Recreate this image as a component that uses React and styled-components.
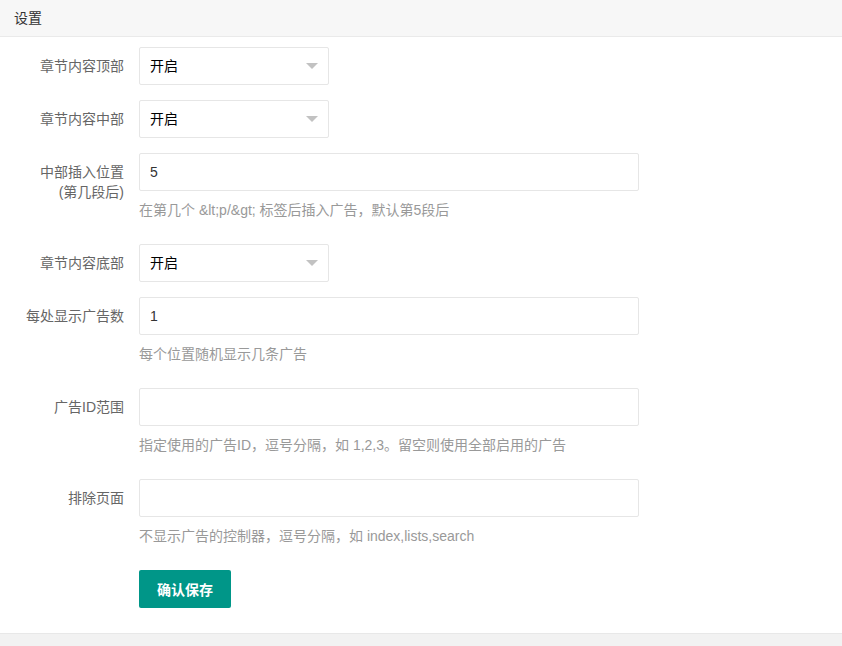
import styled, { createGlobalStyle } from "styled-components";

const GlobalStyle = createGlobalStyle`
  html, body {
    margin: 0;
    padding: 0;
    background: #f2f2f2;
  }
  body {
    font-family: "Liberation Sans", "Noto Sans CJK SC", sans-serif;
    font-size: 14px;
    color: #666;
  }
`;

const fields = [
  { type: "select", label: "章节内容顶部", value: "开启" },
  { type: "select", label: "章节内容中部", value: "开启" },
  {
    type: "input",
    label: "中部插入位置(第几段后)",
    value: "5",
    aux: "在第几个 &lt;p/&gt; 标签后插入广告，默认第5段后",
  },
  { type: "select", label: "章节内容底部", value: "开启" },
  { type: "input", label: "每处显示广告数", value: "1", aux: "每个位置随机显示几条广告" },
  {
    type: "input",
    label: "广告ID范围",
    value: "",
    aux: "指定使用的广告ID，逗号分隔，如 1,2,3。留空则使用全部启用的广告",
  },
  {
    type: "input",
    label: "排除页面",
    value: "",
    aux: "不显示广告的控制器，逗号分隔，如 index,lists,search",
  },
];

function SelectBox({ value }) {
  return (
    <SelectStyled>
      <span>{value}</span>
      <Arrow />
    </SelectStyled>
  );
}

export default function App() {
  return (
    <>
      <GlobalStyle />
      <Card>
        <CardHeader>设置</CardHeader>
        <CardBody>
          {fields.map((f) => (
            <FormItem key={f.label}>
              <Label>{f.label}</Label>
              <Block>
                {f.type === "select" ? (
                  <SelectBox value={f.value} />
                ) : (
                  <Input defaultValue={f.value} />
                )}
                {f.aux && <Aux>{f.aux}</Aux>}
              </Block>
            </FormItem>
          ))}
          <FormItem>
            <span />
            <Block>
              <SaveButton>确认保存</SaveButton>
            </Block>
          </FormItem>
        </CardBody>
      </Card>
    </>
  );
}

const Card = styled.div`
  background: #fff;
  box-shadow: 0 1px 2px rgba(0, 0, 0, 0.06);
  border-bottom: 1px solid #e8e8e8;
`;

const CardHeader = styled.div`
  height: 36px;
  line-height: 36px;
  padding: 0 14px;
  background: #f7f7f7;
  border-bottom: 1px solid #eaeaea;
  color: #333;
`;

const CardBody = styled.div`
  padding: 10px 15px 10px 24px;
`;

const FormItem = styled.div`
  display: grid;
  grid-template-columns: 100px 500px;
  column-gap: 15px;
  margin-bottom: 15px;
`;

const Label = styled.label`
  padding: 9px 0;
  line-height: 20px;
  text-align: right;
  color: #666;
`;

const Block = styled.div`
  display: flex;
  flex-direction: column;
  align-items: flex-start;
`;

const Input = styled.input`
  box-sizing: border-box;
  width: 500px;
  height: 38px;
  padding: 0 10px;
  border: 1px solid #e6e6e6;
  border-radius: 2px;
  font: inherit;
  color: #333;
  outline: none;
`;

const SelectStyled = styled.div`
  box-sizing: border-box;
  position: relative;
  width: 190px;
  height: 38px;
  padding: 0 10px;
  line-height: 36px;
  border: 1px solid #e6e6e6;
  border-radius: 2px;
  color: #000;
`;

const Arrow = styled.i`
  position: absolute;
  right: 10px;
  top: 50%;
  margin-top: -3px;
  width: 0;
  height: 0;
  border-style: solid;
  border-width: 6px 6px 0;
  border-color: #c2c2c2 transparent transparent;
`;

const Aux = styled.div`
  padding: 9px 0;
  line-height: 20px;
  color: #999;
`;

const SaveButton = styled.button`
  height: 38px;
  padding: 0 18px;
  border: none;
  border-radius: 2px;
  background: #009688;
  color: #fff;
  font: inherit;
  font-weight: bold;
  cursor: pointer;
`;
